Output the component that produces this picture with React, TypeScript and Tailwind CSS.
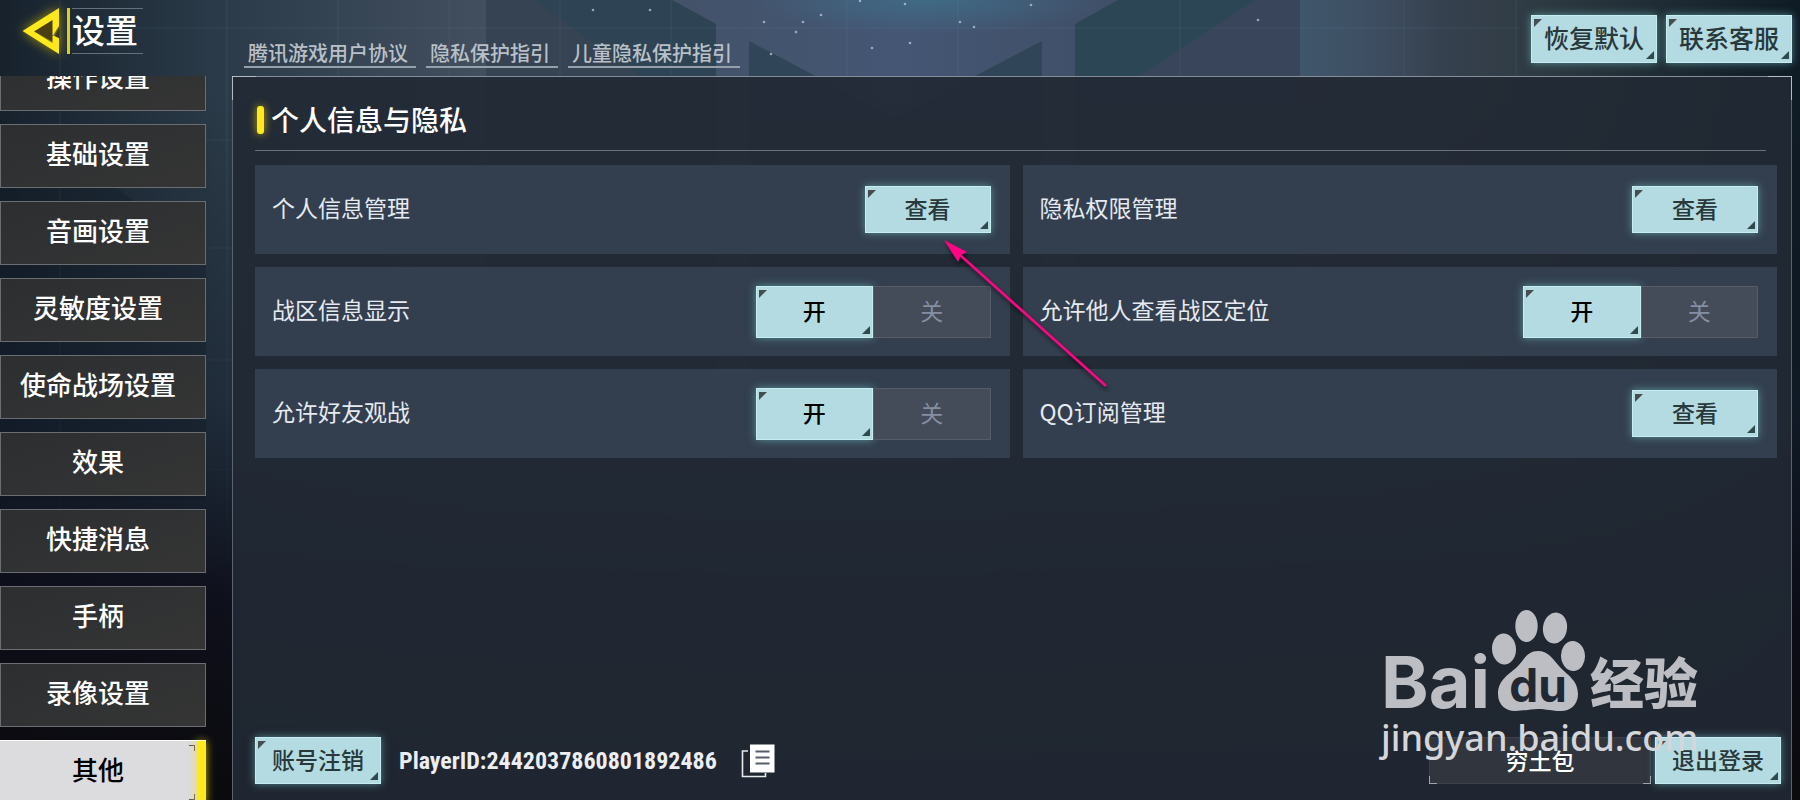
import { useState, type ReactNode } from "react";

const categories = [
  "操作设置",
  "基础设置",
  "音画设置",
  "灵敏度设置",
  "使命战场设置",
  "效果",
  "快捷消息",
  "手柄",
  "录像设置",
  "其他",
];

const policies = ["腾讯游戏用户协议", "隐私保护指引", "儿童隐私保护指引"];

function Corners() {
  return (
    <>
      <svg className="absolute top-[3px] left-[2px] size-2" viewBox="0 0 8 8" aria-hidden="true">
        <path d="M0 0H8L0 8Z" fill="#454d50" />
      </svg>
      <svg className="absolute right-[2px] bottom-[3px] size-2" viewBox="0 0 8 8" aria-hidden="true">
        <path d="M8 0V8H0Z" fill="#2f4a4d" />
      </svg>
    </>
  );
}

function ActionButton({ children, size = "normal" }: { children: ReactNode; size?: "normal" | "large" }) {
  return (
    <button
      type="button"
      className={`relative flex w-[126px] shrink-0 items-center justify-center border border-[#c6eef0] bg-[#b4dbe1] pb-[2px] font-medium text-[#28383b] shadow-[0_0_8px_rgba(120,200,205,0.6)] ${
        size === "large" ? "h-12 text-[25px]" : "h-[47px] text-[23px]"
      }`}
    >
      <Corners />
      {children}
    </button>
  );
}

function Toggle({ name, label }: { name: string; label: string }) {
  const [on, setOn] = useState(true);
  const options = [
    { text: "开", value: true },
    { text: "关", value: false },
  ];
  return (
    <div role="radiogroup" aria-label={label} className="flex h-[52px] w-[235px] shrink-0">
      {options.map((o) => (
        <label
          key={o.text}
          className={`relative flex flex-1 items-center justify-center pb-[2px] text-[23px] ${
            on === o.value
              ? "border border-[#c6eef0] bg-[#b4dbe1] font-medium text-black shadow-[0_0_8px_rgba(120,200,205,0.6)]"
              : "border border-[#565d69] bg-[#444b59] text-[#868ea3]"
          }`}
        >
          <input
            type="radio"
            name={name}
            className="sr-only"
            checked={on === o.value}
            onChange={() => setOn(o.value)}
          />
          {on === o.value && <Corners />}
          {o.text}
        </label>
      ))}
    </div>
  );
}

function SettingCard({ label, children }: { label: string; children: ReactNode }) {
  return (
    <div className="flex h-[89px] items-center justify-between bg-[#333f4f] pr-[19px] pl-[17px]">
      <span className="pb-1 text-[23px] text-[#e6eaf0]">{label}</span>
      {children}
    </div>
  );
}

function Pointer() {
  return (
    <svg
      className="pointer-events-none absolute top-[52px] left-[76px] z-10 h-[156px] w-[172px]"
      viewBox="0 0 172 156"
      aria-hidden="true"
    >
      <g filter="drop-shadow(1px 3px 2px rgba(0,0,0,0.6))">
        <path d="M19 17L165 148" stroke="#ff0583" strokeWidth="2.6" />
        <path d="M3 2L26 14L20 17L17 24Z" fill="#ff0583" />
      </g>
    </svg>
  );
}

function Backdrop() {
  const stars = [
    [650, 10], [764, 22], [796, 32], [803, 22], [821, 15], [860, 1], [872, 48], [905, 4],
    [974, 27], [1031, 5], [960, 22], [593, 10], [771, 54], [1258, 20], [910, 43],
  ];
  return (
    <svg
      className="absolute inset-0 size-full"
      viewBox="0 0 1800 800"
      preserveAspectRatio="xMidYMin slice"
      aria-hidden="true"
    >
      <defs>
        <linearGradient id="base" x1="0" x2="1" y1="0" y2="0">
          <stop offset="0" stopColor="#17222d" />
          <stop offset="0.13" stopColor="#2c3c4a" />
          <stop offset="0.27" stopColor="#424f5f" />
          <stop offset="0.5" stopColor="#445674" />
          <stop offset="0.76" stopColor="#3c4658" />
          <stop offset="0.86" stopColor="#2e3a42" />
          <stop offset="1" stopColor="#0f1b25" />
        </linearGradient>
        <linearGradient id="ground" x1="0" x2="0" y1="0" y2="1">
          <stop offset="0" stopColor="#0b0c12" stopOpacity="0" />
          <stop offset="0.12" stopColor="#0b0c12" stopOpacity="0" />
          <stop offset="0.5" stopColor="#101725" stopOpacity="0.4" />
          <stop offset="0.75" stopColor="#0b0b16" stopOpacity="0.9" />
          <stop offset="1" stopColor="#0b0b0d" />
        </linearGradient>
        <radialGradient id="sky">
          <stop offset="0" stopColor="#3d7891" stopOpacity="0.6" />
          <stop offset="1" stopColor="#3d7891" stopOpacity="0" />
        </radialGradient>
        <linearGradient id="beam" x1="0" x2="1" y1="0" y2="0">
          <stop offset="0" stopColor="#3f566b" />
          <stop offset="1" stopColor="#3f566b" stopOpacity="0" />
        </linearGradient>
      </defs>
      <rect width="1800" height="800" fill="url(#base)" />
      <ellipse cx="930" cy="0" rx="180" ry="34" fill="url(#sky)" />
      <path d="M486 0H672L716 24V400H486Z" fill="#2e4353" />
      <path d="M534 0L640 76H486V0Z" fill="#364353" />
      <path d="M749 41L895 118L1042 41V400H749Z" fill="#304658" />
      <path d="M1075 24L1118 0H1300V400H1075Z" fill="#2d4656" />
      <path d="M1255 0L1140 76H1300V0Z" fill="#38455a" />
      <path d="M1300 0H1440V76H1300Z" fill="url(#beam)" />
      <path d="M0 120L120 190L206 260V500H0Z" fill="#111c28" opacity="0.35" />
      <g stroke="#7fa4bd" strokeOpacity="0.12">
        <path d="M130 28H1520M60 0V600M227 0V800M338 0V76M449 0V76M560 0V76M671 0V76M847 0V76M958 0V76M1180 0V76M1404 0V76M1516 0V76" />
        <path d="M206 140H232M206 248H232M206 360H232M206 470H232" />
      </g>
      {stars.map(([x, y]) => (
        <circle key={`${x}-${y}`} cx={x} cy={y} r="1.3" fill="#c4d0e0" opacity="0.7" />
      ))}
      <rect width="1800" height="800" fill="url(#ground)" />
    </svg>
  );
}

function Watermark() {
  return (
    <div className="pointer-events-none absolute right-[95px] bottom-[36px] z-20 w-[324px] text-[#bcbec4]">
      <div className="flex h-[104px] items-end">
        <span className="w-[109px] font-['Inter'] text-[72px] leading-[60px] font-bold">Bai</span>
        <div className="relative h-[104px] w-[96px] shrink-0">
          <svg className="size-full" viewBox="0 0 96 104" fill="currentColor" aria-hidden="true">
            <ellipse cx="14" cy="41" rx="12" ry="15.5" transform="rotate(-4 14 41)" />
            <ellipse cx="36.5" cy="18" rx="11.2" ry="16" />
            <ellipse cx="65" cy="20" rx="12" ry="15.5" transform="rotate(9 65 20)" />
            <ellipse cx="83" cy="48" rx="12" ry="15" transform="rotate(-4 83 48)" />
            <path d="M48 43C38 43 35 50 28 58C20 66 8 71 8 86C8 97 16 103 25 103C34 103 40 101 48 101C56 101 62 103 71 103C80 103 88 97 88 86C88 72 77 67 69 58C62 50 58 43 48 43Z" />
          </svg>
          <span className="absolute inset-x-0 top-[53px] text-center font-['Inter'] text-[46px] leading-[48px] font-bold text-[#222833]">
            du
          </span>
        </div>
        <span className="pl-1 text-[54px] leading-[62px] font-black whitespace-nowrap">经验</span>
      </div>
      <div className="font-['Noto_Sans'] text-[36px] leading-[52px] font-medium text-[#d4d6da]">jingyan.baidu.com</div>
    </div>
  );
}

function CopyIcon() {
  return (
    <svg className="h-[34px] w-[34px]" viewBox="0 0 34 34" aria-hidden="true">
      <path d="M7 7H1.5V32.5H24.5V29" fill="none" stroke="#e8eaee" strokeWidth="1.6" />
      <rect x="9" y="0.5" width="24.5" height="28" fill="#fff" />
      <path d="M14.5 7.5H28.5M14.5 13.5H28.5M14.5 19.5H28.5" stroke="#555d68" strokeWidth="2" />
    </svg>
  );
}

export default function App() {
  const [active, setActive] = useState("其他");
  return (
    <div className="relative flex h-screen flex-col overflow-hidden bg-[#17222d] font-['Noto_Sans_CJK_SC','Noto_Sans',sans-serif]">
      <Backdrop />

      <header className="relative flex h-[76px] shrink-0 pr-2">
        <div className="flex w-[244px] shrink-0 items-start pt-2 pl-[22px]">
          <button type="button" aria-label="返回" className="h-[46px] w-[38px]">
            <svg
              className="size-full overflow-visible drop-shadow-[0_0_6px_rgba(255,220,0,0.6)]"
              viewBox="0 0 38 46"
              aria-hidden="true"
            >
              <path d="M12 23L31 11V34Z" fill="#4a3f14" />
              <path
                d="M0.5 23L37 0V17L30.5 28V12L12 23.5L30.5 35V28L37 27V46Z"
                fill="#ffe81c"
              />
              <path d="M31 10.500V27L37 18V14Z" fill="#ffe81c" />
              <path d="M32.500 28L37.500 20V30.500Z" fill="#3b3a1c" />
            </svg>
          </button>
          <div className="ml-[7px] h-[46px] w-[3px] bg-[#e0cc20]" />
          <h1 className="ml-[2px] flex h-[46px] w-[71px] items-center border-y border-[#66707a] pb-[2px] text-[33px] font-medium text-white">
            设置
          </h1>
        </div>
        <nav aria-label="协议" className="flex items-end gap-[10px] pb-2">
          {policies.map((p) => (
            <a
              key={p}
              href="#"
              className="border-b-2 border-[#96a0ab] pr-2 pl-1 text-[20px] leading-[26px] font-medium text-[#b9c0c8]"
            >
              {p}
            </a>
          ))}
        </nav>
        <div className="ml-auto flex gap-[9px] pt-[15px]">
          <ActionButton size="large">恢复默认</ActionButton>
          <ActionButton size="large">联系客服</ActionButton>
        </div>
      </header>

      <div className="relative flex min-h-0 flex-1">
        <nav aria-label="设置分类" className="w-[232px] shrink-0 overflow-hidden">
          <ul className="-mt-[29px] flex w-[206px] flex-col gap-[13px]">
            {categories.map((c) => {
              const selected = c === active;
              return (
                <li key={c}>
                  <button
                    type="button"
                    aria-current={selected ? "page" : undefined}
                    onClick={() => setActive(c)}
                    className={`relative flex h-16 w-full items-center justify-center pr-[10px] pb-2 text-[26px] font-medium whitespace-nowrap ${
                      selected
                        ? "border-t border-white bg-[#dcdbde] text-black"
                        : "border border-[#6a6e72] bg-linear-to-br from-[#2c2e30] to-[#353535] text-white"
                    }`}
                  >
                    {c}
                    {selected && (
                      <>
                        <span className="absolute top-1 right-[11px] size-[6px] border-t border-r border-[#555]" />
                        <span className="absolute right-[11px] bottom-1 size-[6px] border-r border-b border-[#555]" />
                        <span className="absolute inset-y-0 right-0 w-[9px] bg-[#ffe81c] shadow-[0_0_9px_rgba(255,225,0,0.75)]" />
                      </>
                    )}
                  </button>
                </li>
              );
            })}
          </ul>
        </nav>

        <main className="relative mr-2 flex min-w-0 flex-1 flex-col border-x border-t border-[#5b6370] border-t-[#868e99] bg-[#222934]/92 pr-[14px] pb-4 pl-[22px]">
          <span className="absolute -top-px -left-px size-6 border-t border-l border-[#b5bcc5]" />
          <span className="absolute -top-px -right-px size-6 border-t border-r border-[#b5bcc5]" />

          <div className="mr-[11px] flex h-[74px] shrink-0 items-center border-b border-[#69717d] pt-[14px] pb-[2px]">
            <span className="mr-[7px] ml-[2px] h-7 w-[7px] rounded-[3px] bg-[#ffe81c] shadow-[0_0_8px_rgba(255,225,0,0.7)]" />
            <h2 className="pb-[2px] text-[28px] leading-[36px] font-medium text-white">个人信息与隐私</h2>
          </div>

          <div className="mt-[14px] grid grid-cols-2 gap-[13px]">
            <SettingCard label="个人信息管理">
              <div className="relative">
                <ActionButton>查看</ActionButton>
                <Pointer />
              </div>
            </SettingCard>
            <SettingCard label="隐私权限管理">
              <ActionButton>查看</ActionButton>
            </SettingCard>
            <SettingCard label="战区信息显示">
              <Toggle name="zone-info" label="战区信息显示" />
            </SettingCard>
            <SettingCard label="允许他人查看战区定位">
              <Toggle name="zone-location" label="允许他人查看战区定位" />
            </SettingCard>
            <SettingCard label="允许好友观战">
              <Toggle name="spectate" label="允许好友观战" />
            </SettingCard>
            <SettingCard label="QQ订阅管理">
              <ActionButton>查看</ActionButton>
            </SettingCard>
          </div>

          <footer className="mt-auto -mr-1 flex items-center">
            <ActionButton>账号注销</ActionButton>
            <span className="ml-[18px] font-['Roboto_Condensed','Liberation_Sans_Narrow','Roboto',sans-serif] text-[24px] leading-[32px] font-bold text-[#eceef2]">
              PlayerID:2442037860801892486
            </span>
            <button type="button" aria-label="复制" className="ml-6">
              <CopyIcon />
            </button>
            <div className="relative mr-1 ml-auto flex h-[47px] w-[222px] items-center justify-center border border-[#3b414c] bg-[#31353d] text-[23px] font-medium text-white">
              穷土包
              <span className="absolute -bottom-px -left-px size-2 border-b border-l border-[#a0a5ad]" />
              <span className="absolute -right-px -bottom-px size-2 border-r border-b border-[#a0a5ad]" />
            </div>
            <ActionButton>退出登录</ActionButton>
          </footer>
        </main>
      </div>

      <Watermark />
    </div>
  );
}
